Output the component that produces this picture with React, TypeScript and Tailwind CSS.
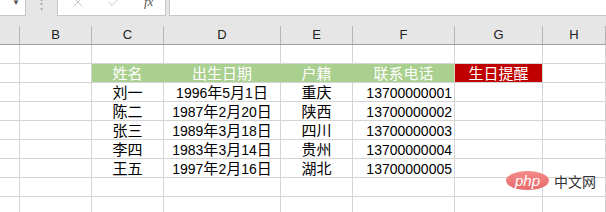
import { X, Check } from "lucide-react";

const rows = [
    ["刘一", "1996年5月1日", "重庆", "13700000001"],
    ["陈二", "1987年2月20日", "陕西", "13700000002"],
    ["张三", "1989年3月18日", "四川", "13700000003"],
    ["李四", "1983年3月14日", "贵州", "13700000004"],
    ["王五", "1997年2月16日", "湖北", "13700000005"],
];

const letters = ["", "B", "C", "D", "E", "F", "G", "H"];

const grid = "grid grid-cols-[20px_72px_72px_117px_72px_102px_88px_1fr]";
const cell = "h-[19px] border-r border-b border-[#d4d4d4] flex items-center pt-[1px] overflow-hidden whitespace-nowrap";

// digits are a bit narrower than the CJK glyphs in the sheet
function Mixed({ text }: { text: string }) {
    const parts = text.split(/(\d+)/).filter(Boolean);
    return (
        <>
            {parts.map((p, i) =>
                /^\d+$/.test(p) ? (
                    <span key={i} className="text-[14px]">{p}</span>
                ) : (
                    <span key={i}>{p}</span>
                )
            )}
        </>
    );
}

function EmptyRow() {
    return (
        <div className={grid}>
            {letters.map((l, i) => (
                <div key={l + i} className={cell} />
            ))}
        </div>
    );
}

export default function App() {
    return (
        <div className="relative w-[606px] h-[212px] overflow-hidden bg-white text-[15px] leading-[18px] text-black font-['Liberation_Sans','Noto_Sans_CJK_SC',sans-serif]">
            {/* formula bar, scrolled so its top is cut */}
            <div className="flex h-[16px] bg-[#e6e6e6]">
                <div className="relative w-[26px] bg-white border-r border-b border-[#c6c6c6]">
                    <span className="absolute left-[12px] top-[-6px] text-[8px] text-[#555]">▼</span>
                </div>
                <div className="w-[31px] flex justify-center">
                    <span className="mt-[-5px] text-[13px] text-[#9a9a9a] leading-[18px]">⋮</span>
                </div>
                <div className="w-[109px] bg-white border-l border-r border-b border-[#c6c6c6] flex items-start">
                    <X size={16} strokeWidth={1.5} className="ml-[12px] mt-[-6px] text-[#c4c4c4]" />
                    <Check size={16} strokeWidth={1.5} className="ml-[20px] mt-[-6px] text-[#c4c4c4]" />
                    <span className="ml-[22px] mt-[-6px] italic text-[13px] leading-[16px] text-[#555] font-['Liberation_Serif',serif]">fx</span>
                </div>
                <div className="w-[3px]" />
                <div className="flex-1 bg-white border-l border-b border-[#c6c6c6]" />
            </div>
            <div className="h-[10px] bg-[#e6e6e6]" />

            {/* column letters */}
            <div className={grid + " h-[19px] bg-[#e6e6e6] border-b border-[#9e9e9e]"}>
                {letters.map((l, i) => (
                    <div
                        key={l + i}
                        className="border-r border-[#b4b4b4] flex items-center justify-center text-[13px] text-[#222] font-['Liberation_Sans',sans-serif]"
                    >
                        {l}
                    </div>
                ))}
            </div>

            <EmptyRow />

            {/* table header */}
            <div className={grid}>
                <div className={cell} />
                <div className={cell} />
                <div className={cell + " justify-center bg-[#a9d08e] border-r-[#a9d08e] text-white"}>姓名</div>
                <div className={cell + " justify-center bg-[#a9d08e] border-r-[#a9d08e] text-white"}>出生日期</div>
                <div className={cell + " justify-center bg-[#a9d08e] border-r-[#a9d08e] text-white"}>户籍</div>
                <div className={cell + " justify-center bg-[#a9d08e] text-white"}>联系电话</div>
                <div className={cell + " justify-center bg-[#c00000] text-white"}>生日提醒</div>
                <div className={cell} />
            </div>

            {rows.map((r) => (
                <div key={r[0]} className={grid}>
                    <div className={cell} />
                    <div className={cell} />
                    <div className={cell + " justify-center"}>{r[0]}</div>
                    <div className={cell + " justify-center"}>
                        <Mixed text={r[1]} />
                    </div>
                    <div className={cell + " justify-center"}>{r[2]}</div>
                    <div className={cell + " justify-end pr-[2px] text-[14px]"}>{r[3]}</div>
                    <div className={cell} />
                    <div className={cell} />
                </div>
            ))}

            <EmptyRow />
            <EmptyRow />

            {/* watermark */}
            <div className="absolute left-[506px] top-[171px] flex items-center">
                <div className="w-[43px] h-[19px] rounded-[50%] bg-gradient-to-b from-[#f48a8a] to-[#e86a6a] flex items-center justify-center">
                    <span className="italic text-[15px] leading-[15px] text-white font-['Liberation_Sans',sans-serif]">php</span>
                </div>
                <span className="ml-[5px] text-[14px] leading-[16px] text-[#333] font-['Noto_Sans_CJK_SC',sans-serif]">中文网</span>
            </div>
        </div>
    );
}
